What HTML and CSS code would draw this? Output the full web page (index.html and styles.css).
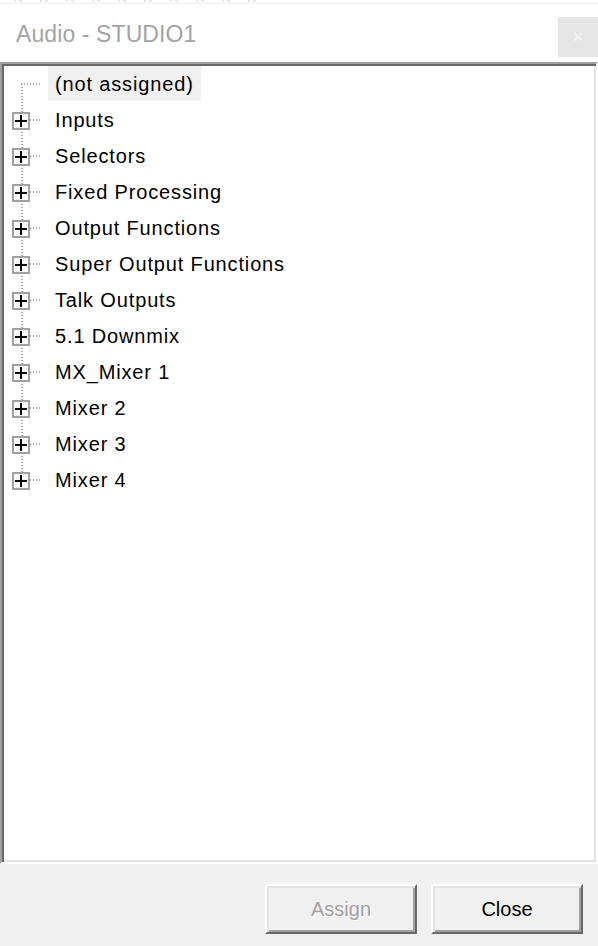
FILE: index.html
```html
<!DOCTYPE html>
<html lang="en">
<head>
  <meta charset="UTF-8" />
  <title>Audio - STUDIO1</title>
  <link rel="stylesheet" href="styles.css">
</head>
<body>
  <div class="ghost-bar"></div>

  <header class="title-bar">
    <div class="title-text">Audio - STUDIO1</div>
    <button class="close-x" disabled>&#x2715;</button>
  </header>

  <main class="tree-frame">
    <ul class="tree-list">
      <li class="tree-row leaf">
        <span class="toggle-slot"></span>
        <span class="node-label selected">(not assigned)</span>
      </li>
      <li class="tree-row"><span class="toggle-slot"><span class="plus-box"></span></span><span class="node-label">Inputs</span></li>
      <li class="tree-row"><span class="toggle-slot"><span class="plus-box"></span></span><span class="node-label">Selectors</span></li>
      <li class="tree-row"><span class="toggle-slot"><span class="plus-box"></span></span><span class="node-label">Fixed Processing</span></li>
      <li class="tree-row"><span class="toggle-slot"><span class="plus-box"></span></span><span class="node-label">Output Functions</span></li>
      <li class="tree-row"><span class="toggle-slot"><span class="plus-box"></span></span><span class="node-label">Super Output Functions</span></li>
      <li class="tree-row"><span class="toggle-slot"><span class="plus-box"></span></span><span class="node-label">Talk Outputs</span></li>
      <li class="tree-row"><span class="toggle-slot"><span class="plus-box"></span></span><span class="node-label">5.1 Downmix</span></li>
      <li class="tree-row"><span class="toggle-slot"><span class="plus-box"></span></span><span class="node-label">MX_Mixer 1</span></li>
      <li class="tree-row"><span class="toggle-slot"><span class="plus-box"></span></span><span class="node-label">Mixer 2</span></li>
      <li class="tree-row"><span class="toggle-slot"><span class="plus-box"></span></span><span class="node-label">Mixer 3</span></li>
      <li class="tree-row"><span class="toggle-slot"><span class="plus-box"></span></span><span class="node-label">Mixer 4</span></li>
    </ul>
  </main>

  <footer class="button-bar">
    <button class="win-btn" disabled>Assign</button>
    <button class="win-btn">Close</button>
  </footer>
</body>
</html>
```

FILE: styles.css
```css
* {
  margin: 0;
  padding: 0;
  box-sizing: border-box;
}

html, body {
  width: 598px;
  height: 946px;
  overflow: hidden;
}

body {
  font-family: 'Liberation Sans', Arial, sans-serif;
  background: #fff;
  display: flex;
  flex-direction: column;
}

/* leftover edge of the window behind */
.ghost-bar {
  height: 4px;
  background:
    repeating-linear-gradient(to right, transparent 0 14px, #e2e2e2 14px 16px, transparent 16px 19px, #e6e6e6 19px 22px, transparent 22px 26px) 0 0 / 260px 2px no-repeat;
  border-bottom: 1px solid #f0f0f0;
}

.title-bar {
  height: 58px;
  display: flex;
  align-items: flex-start;
  justify-content: space-between;
}

.title-text {
  margin: 17px 0 0 16px;
  font-size: 23px;
  color: #a3a3a3;
  letter-spacing: 0.1px;
}

.close-x {
  margin-top: 13px;
  width: 40px;
  height: 40px;
  border: none;
  background: #e5e5e5;
  color: #f6f6f6;
  font-size: 15px;
  font-family: 'DejaVu Sans', sans-serif;
}

.tree-frame {
  height: 802px;
  border: 2px solid;
  border-color: #a0a0a0 #fff #fff #a0a0a0;
  box-shadow: inset 2px 2px 0 #696969, inset -2px -2px 0 #e3e3e3;
  background: #fff;
}

.tree-list {
  list-style: none;
  position: relative;
  padding-top: 2px;
}

/* vertical dotted connector running through the root nodes */
.tree-list::before {
  content: '';
  position: absolute;
  left: 19px;
  top: 20px;
  width: 2px;
  height: 396px;
  background: repeating-linear-gradient(to bottom, #a8a8a8 0 1.5px, transparent 1.5px 3px);
}

.tree-row {
  position: relative;
  height: 36px;
  display: flex;
  align-items: center;
}

.tree-row::before {
  content: '';
  position: absolute;
  left: 19px;
  top: 17px;
  width: 19px;
  height: 2px;
  background: repeating-linear-gradient(to right, #a8a8a8 0 1.5px, transparent 1.5px 3px);
}

.toggle-slot {
  width: 18px;
  height: 18px;
  margin: 1px 18px 0 10px;
  position: relative;
  z-index: 1;
}

.plus-box {
  display: block;
  width: 18px;
  height: 18px;
  border: 2px solid #a0a0a0;
  background: #fff;
  position: relative;
}

.plus-box::before,
.plus-box::after {
  content: '';
  position: absolute;
  background: #000;
}

.plus-box::before {
  left: 1px;
  top: 6px;
  width: 12px;
  height: 2px;
}

.plus-box::after {
  left: 6px;
  top: 1px;
  width: 2px;
  height: 12px;
}

.node-label {
  font-size: 20px;
  letter-spacing: 0.85px;
  color: #000;
  padding: 2px 7px 0;
  line-height: 33px;
  height: 35px;
  margin-top: -1px;
  white-space: nowrap;
}

.node-label.selected {
  background: #f0f0f0;
}

.button-bar {
  flex: 1;
  background: #f0f0f0;
  display: flex;
  justify-content: flex-end;
  align-items: flex-start;
  gap: 14px;
  padding: 20px 15px 0 0;
}

.win-btn {
  width: 152px;
  height: 50px;
  font-family: 'Liberation Sans', Arial, sans-serif;
  font-size: 20px;
  color: #000;
  background: #f0f0f0;
  border: 2px solid;
  border-color: #fff #696969 #696969 #fff;
  box-shadow: inset 2px 2px 0 #e3e3e3, inset -2px -2px 0 #a0a0a0;
}

.win-btn:disabled {
  color: #a0a0a0;
  text-shadow: 1px 1px 0 #fff;
}
```
